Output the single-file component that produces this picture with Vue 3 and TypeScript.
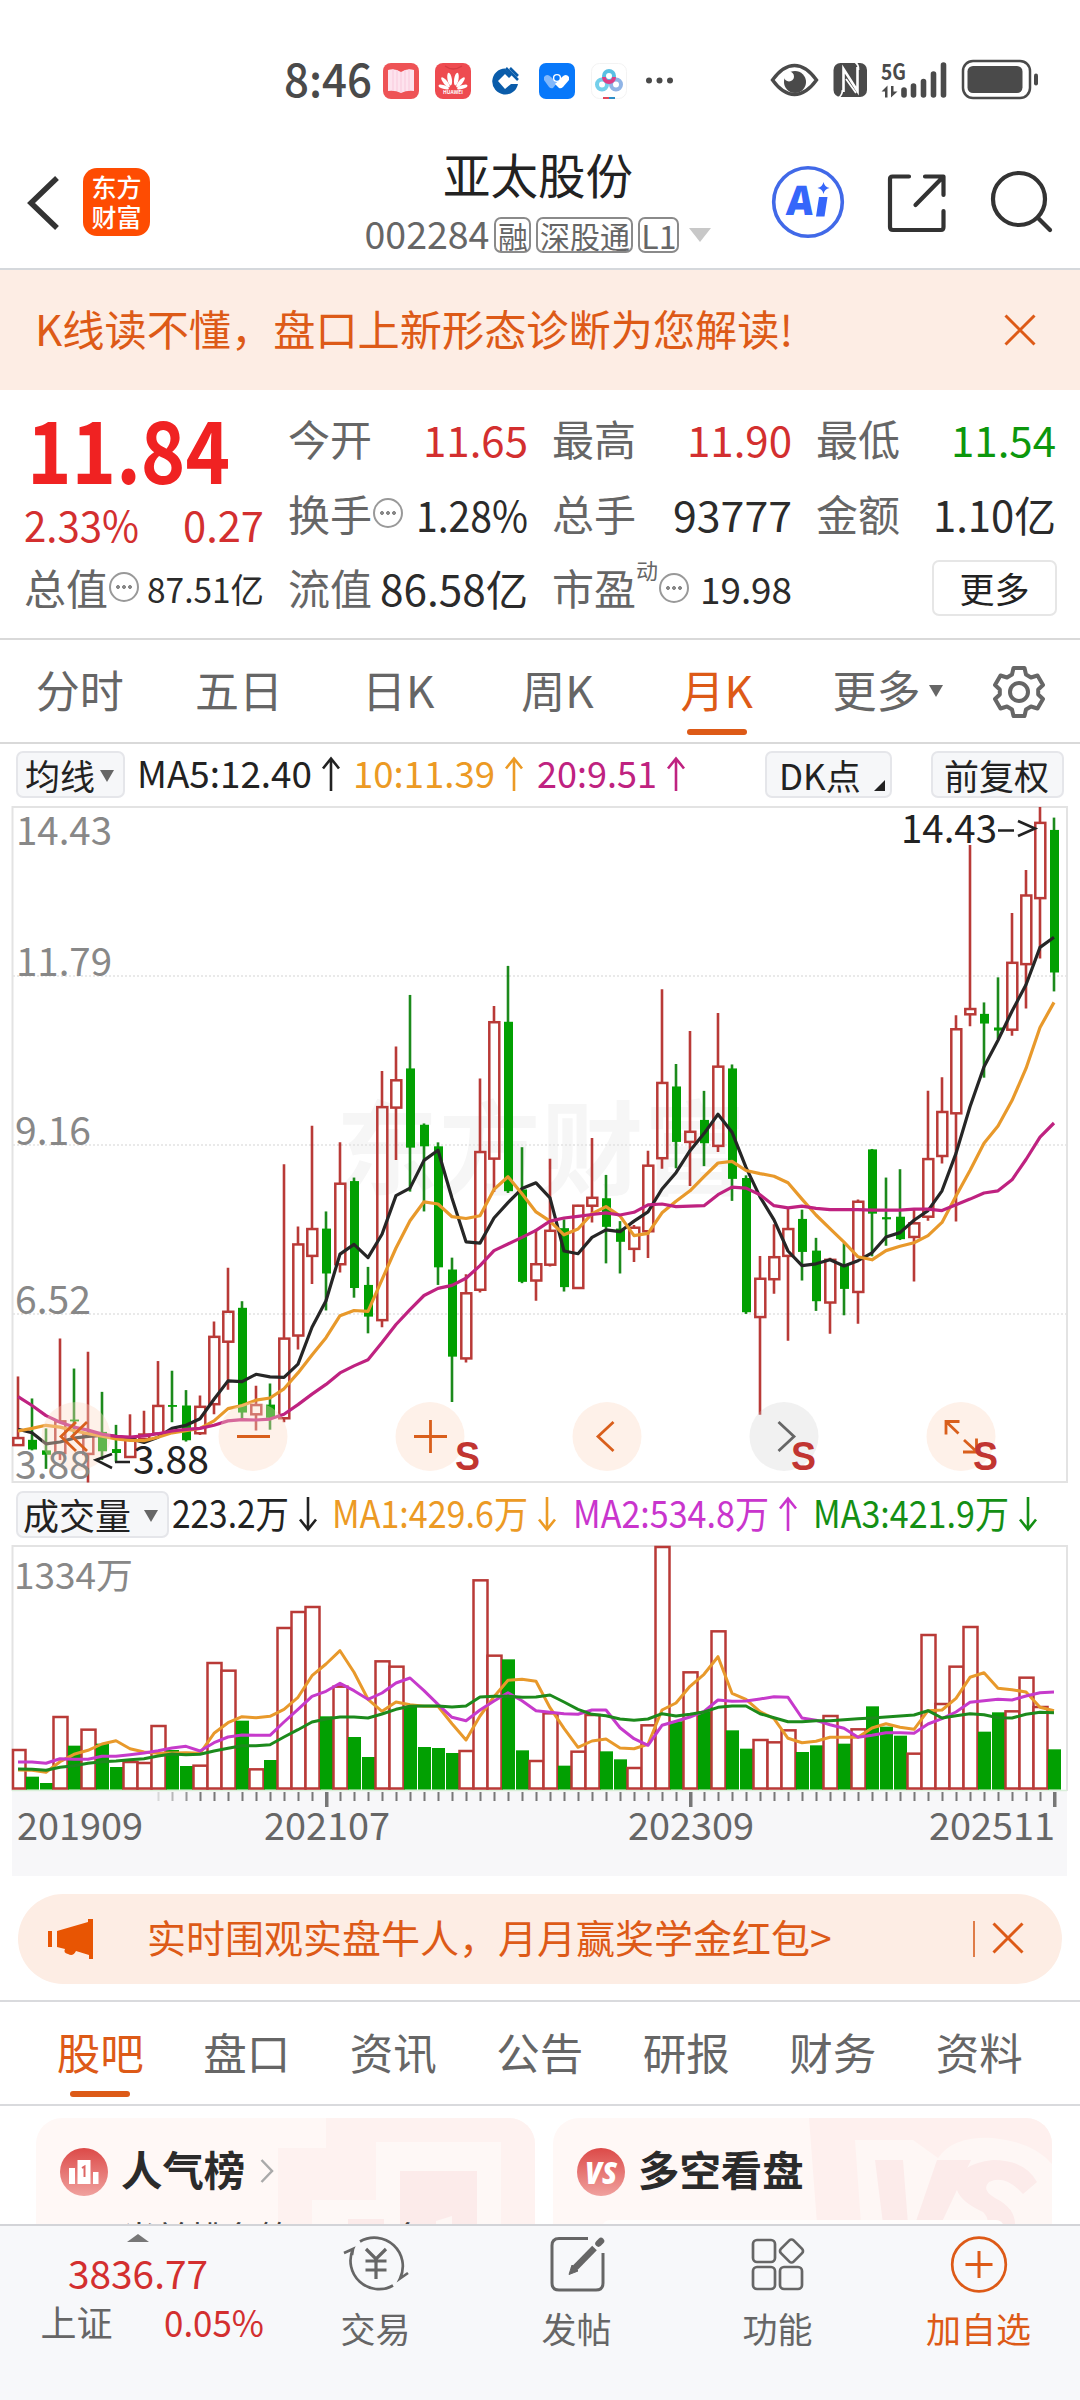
<script setup lang="ts">
import { h } from 'vue'

type Kind = 'r' | 'g'
type Candle = [Kind, number, number, number, number]

/* Text squeezed or stretched to a fixed advance width. */
const Fit = (p: { t: string; w: number; s: number; b?: number }) =>
  h('svg', { class: 'fit', width: p.w, height: p.s, viewBox: `0 0 ${p.w} ${p.s}` }, [
    h('text', {
      x: 0,
      y: p.s * 0.87,
      'font-size': p.s,
      'font-weight': p.b ?? 400,
      textLength: p.w,
      lengthAdjust: 'spacingAndGlyphs',
      fill: 'currentColor',
    }, p.t),
  ])
Fit.props = ['t', 'w', 's', 'b']

const Arrow = (p: { down?: boolean }) =>
  h('svg', { class: 'arrow', width: 20, height: 32, viewBox: '0 0 20 32', fill: 'none', stroke: 'currentColor', 'stroke-width': 2.6 }, [
    h('path', { d: p.down ? 'M10 -1V31M2 21.5L10 31.5L18 21.5' : 'M10 33V1M2 10.500L10 .5L18 10.500' }),
  ])
Arrow.props = ['down']

const STEP = 14
const X0 = 18
const cx = (i: number) => X0 + i * STEP

/* kind, high, body top, body bottom, low */
const candles: Candle[] = [
  ['r', 1310, 1450, 1466, 1466], ['g', 1360, 1454, 1476, 1478], ['g', 1428, 1478, 1488, 1520], ['r', 1224, 1412, 1484, 1500],
  ['g', 1292, 1408, 1412, 1440], ['r', 1254, 1440, 1486, 1551], ['g', 1345, 1436, 1480, 1500], ['g', 1420, 1475, 1484, 1504],
  ['r', 1396, 1452, 1493, 1493], ['r', 1388, 1442, 1452, 1456], ['r', 1275, 1377, 1440, 1440], ['g', 1297, 1375, 1379, 1414],
  ['g', 1341, 1376, 1455, 1458], ['r', 1353, 1379, 1439, 1443], ['r', 1185, 1220, 1373, 1396], ['r', 1063, 1163, 1231, 1340],
  ['g', 1139, 1154, 1392, 1410], ['r', 1331, 1375, 1396, 1433], ['g', 1326, 1374, 1404, 1431], ['r', 828, 1224, 1405, 1414],
  ['r', 969, 1010, 1217, 1249], ['r', 740, 975, 1036, 1100], ['g', 935, 974, 1076, 1160], ['r', 778, 872, 1055, 1074],
  ['g', 858, 866, 1109, 1131], ['g', 1061, 1102, 1174, 1212], ['r', 616, 698, 1182, 1198], ['r', 560, 637, 699, 818],
  ['g', 443, 610, 790, 890], ['g', 735, 738, 787, 935], ['g', 778, 787, 1062, 1102], ['g', 1040, 1067, 1265, 1368],
  ['r', 1078, 1121, 1269, 1278], ['r', 633, 800, 1113, 1119], ['r', 468, 505, 815, 891], ['g', 377, 504, 889, 893],
  ['g', 789, 885, 1095, 1098], ['r', 975, 1055, 1092, 1138], ['r', 815, 979, 1056, 1060], ['g', 953, 973, 1107, 1117],
  ['r', 920, 922, 1109, 1109], ['r', 768, 904, 922, 960], ['g', 852, 905, 970, 1053], ['g', 957, 974, 1004, 1076],
  ['r', 966, 972, 1020, 1050], ['r', 797, 831, 980, 1041], ['r', 430, 643, 814, 838], ['g', 600, 651, 777, 837],
  ['r', 525, 754, 777, 877], ['g', 661, 727, 780, 832], ['r', 484, 606, 786, 800], ['g', 601, 610, 861, 911],
  ['g', 853, 859, 1164, 1168], ['r', 1036, 1088, 1175, 1397], ['r', 964, 1039, 1089, 1122], ['r', 925, 975, 1036, 1229],
  ['g', 931, 952, 1027, 1092], ['g', 995, 1024, 1139, 1161], ['r', 1040, 1045, 1142, 1213], ['g', 1007, 1055, 1111, 1171],
  ['r', 908, 913, 1118, 1190], ['g', 793, 794, 940, 1037], ['g', 858, 948, 953, 1013], ['g', 839, 947, 998, 1000],
  ['r', 930, 962, 993, 1094], ['r', 661, 816, 947, 956], ['r', 630, 709, 809, 826], ['r', 489, 521, 712, 958],
  ['r', 102, 475, 487, 514], ['g', 460, 486, 508, 631], ['g', 403, 517, 524, 543], ['r', 257, 370, 522, 536],
  ['r', 159, 217, 373, 474], ['r', 16, 52, 223, 360], ['g', 40, 68, 392, 435],
]

const ma5 = [1430, 1438, 1463, 1459, 1450, 1446, 1444, 1446, 1451, 1460, 1448, 1428, 1421, 1406, 1362, 1320, 1322, 1305, 1311, 1312, 1282, 1198, 1138, 1032, 1010, 1040, 987, 899, 882, 819, 796, 905, 1004, 1007, 950, 915, 883, 870, 904, 1025, 1031, 994, 977, 981, 957, 936, 884, 847, 797, 758, 714, 755, 835, 902, 954, 1025, 1058, 1054, 1045, 1059, 1047, 1029, 993, 983, 955, 933, 888, 803, 697, 606, 546, 480, 420, 335, 312]
const ma10 = [1434, 1428, 1421, 1425, 1433, 1440, 1446, 1452, 1455, 1456, 1448, 1438, 1433, 1428, 1411, 1383, 1376, 1364, 1359, 1338, 1302, 1261, 1222, 1172, 1160, 1162, 1090, 1018, 956, 913, 918, 947, 951, 945, 885, 856, 895, 936, 957, 988, 975, 940, 924, 945, 990, 985, 938, 912, 888, 856, 825, 821, 842, 849, 855, 870, 907, 943, 974, 1005, 1038, 1045, 1024, 1014, 1006, 990, 960, 900, 842, 780, 741, 683, 610, 517, 460]
const ma20 = [1356, 1376, 1399, 1414, 1425, 1432, 1441, 1446, 1448, 1445, 1440, 1434, 1430, 1428, 1421, 1411, 1408, 1409, 1407, 1396, 1374, 1350, 1328, 1302, 1286, 1272, 1233, 1192, 1158, 1126, 1110, 1103, 1087, 1058, 1024, 1009, 994, 978, 957, 950, 946, 942, 938, 943, 937, 920, 918, 924, 923, 922, 897, 880, 882, 897, 922, 927, 923, 928, 931, 931, 931, 932, 932, 932, 930, 930, 933, 920, 907, 893, 888, 863, 817, 766, 734]

const py = (v: number) => v / 2.2725 - 6
const linePoints = (vs: number[], f: (v: number) => number) => vs.map((v, i) => `${cx(i)},${f(v).toFixed(1)}`).join(' ')

const volTop = [810, 890, 909, 711, 797, 749, 791, 861, 846, 849, 738, 810, 858, 857, 549, 572, 722, 868, 840, 444, 396, 381, 709, 620, 771, 831, 544, 560, 678, 801, 804, 819, 813, 301, 527, 538, 811, 843, 700, 857, 815, 705, 814, 838, 864, 736, 201, 724, 577, 694, 454, 751, 806, 780, 787, 751, 816, 796, 708, 791, 748, 679, 740, 767, 821, 465, 672, 560, 441, 755, 697, 694, 593, 681, 808]
const v1 = [870, 871, 877, 845, 823, 811, 792, 782, 806, 816, 820, 819, 818, 820, 760, 728, 710, 713, 709, 688, 652, 587, 552, 512, 577, 658, 694, 666, 674, 679, 679, 731, 780, 708, 650, 601, 598, 604, 683, 745, 802, 783, 777, 804, 806, 793, 690, 669, 619, 583, 530, 640, 658, 695, 716, 775, 788, 784, 772, 772, 772, 744, 731, 742, 748, 692, 690, 655, 592, 578, 625, 629, 636, 682, 692]
const v2 = [846, 846, 850, 836, 838, 838, 829, 829, 824, 819, 812, 804, 799, 813, 788, 771, 765, 766, 766, 726, 688, 649, 634, 610, 632, 658, 639, 609, 594, 632, 673, 712, 722, 690, 663, 638, 662, 692, 697, 701, 703, 690, 690, 743, 776, 796, 736, 724, 711, 694, 660, 664, 663, 657, 650, 652, 714, 721, 734, 745, 772, 766, 758, 758, 760, 732, 716, 696, 667, 662, 658, 660, 648, 638, 636]
const v3 = [867, 868, 871, 862, 857, 850, 845, 843, 839, 836, 828, 822, 824, 823, 813, 805, 797, 797, 794, 771, 749, 726, 717, 711, 711, 714, 702, 688, 679, 678, 678, 681, 678, 651, 649, 649, 652, 651, 645, 666, 688, 703, 707, 717, 721, 717, 701, 708, 703, 696, 682, 678, 678, 701, 713, 725, 725, 722, 722, 719, 716, 714, 711, 708, 705, 692, 714, 707, 701, 704, 713, 714, 703, 697, 698]
const vy = (v: number) => v / 3 - 65
const volBase = 244.5

const ticks = Array.from({ length: 65 }, (_, k) => k + 10)
const isMajor = (i: number) => i === 22 || i === 48 || i === 74
const tickOpacity = (i: number) => Math.min(1, 0.25 + (i - 10) * 0.25)

const chartTabs = ['分时', '五日', '日K', '周K', '月K']
const infoTabs = ['股吧', '盘口', '资讯', '公告', '研报', '财务', '资料']
</script>

<template>
  <div class="page">
    <div class="status">
      <Fit class="clock" t="8:46" :w="88" :s="46" :b="500" />
      <div class="apps">
        <svg width="36" height="36" viewBox="0 0 36 36"><rect width="36" height="36" rx="8" fill="#ee5356" /><path d="M5 7Q12 5 18 9Q24 5 31 7V28Q24 27 18 30Q12 27 5 28Z" fill="#fde3ee" /><path d="M10 6V28M14 7V28M26 6V28M22 7V28M18 9V30" stroke="#f9c9dc" stroke-width="1" /></svg>
        <svg width="36" height="36" viewBox="0 0 36 36"><rect width="36" height="36" rx="8" fill="#ee4b50" /><path d="M10 3Q18 9 27 3" fill="none" stroke="#d63c42" stroke-width="1.3" /><g fill="#fff"><ellipse cx="15.7" cy="16" rx="2.2" ry="6.4" transform="rotate(-10 15.7 22)" /><ellipse cx="20.3" cy="16" rx="2.2" ry="6.4" transform="rotate(10 20.3 22)" /><ellipse cx="14" cy="17" rx="2" ry="6.3" transform="rotate(-40 15.5 23)" /><ellipse cx="22" cy="17" rx="2" ry="6.3" transform="rotate(40 20.5 23)" /><ellipse cx="13" cy="18" rx="1.8" ry="5.4" transform="rotate(-72 15 24)" /><ellipse cx="23" cy="18" rx="1.8" ry="5.4" transform="rotate(72 21 24)" /></g><text x="18" y="31" text-anchor="middle" font-size="5" font-weight="700" fill="#fff" textLength="20">HUAWEI</text></svg>
        <svg width="36" height="36" viewBox="0 0 36 36"><path d="M18 5.5A13 13 0 1 0 31 21H24L18 26L11 18L18 11L22 15L25 12Z" fill="#0a5caa" /><path d="M19 5L31 17M23 5L31 13" stroke="#0a5caa" stroke-width="2.6" /><path d="M18 12L24 18L18 24L12 18Z" fill="#fff" /></svg>
        <svg width="36" height="36" viewBox="0 0 36 36"><rect width="36" height="36" rx="7" fill="#0878fa" /><path d="M5 14Q8 10 12 14L18 20L14 25Q12 26 10 24L5 17Z" fill="#82b8fb" /><path d="M30 14Q27 10 23 14L16 21L20 25Q22 26 24 24L30 17Z" fill="#fff" /><circle cx="18" cy="15" r="3.4" fill="#0878fa" stroke="#fff" stroke-width="1.4" /></svg>
        <svg width="36" height="36" viewBox="0 0 36 36" fill="none" stroke-width="4"><rect x=".5" y=".5" width="35" height="35" rx="8" stroke="#f3f3f3" stroke-width="1" /><circle cx="11" cy="21.500" r="5" stroke="#74cfea" /><circle cx="25" cy="21.500" r="5" stroke="#8fb4e6" /><circle cx="18" cy="13" r="5" stroke="#59bfe3" /><path d="M13 14A5 5 0 0 0 23 14" stroke="#dd3f86" /><path d="M12 35H18" stroke="#e2495a" stroke-width="2" /><path d="M18 35H24" stroke="#2c8dc6" stroke-width="2" /></svg>
        <svg width="36" height="36" viewBox="0 0 36 36" fill="#4a4a4a"><circle cx="6" cy="17.500" r="3" /><circle cx="16.500" cy="17.500" r="3" /><circle cx="27" cy="17.500" r="3" /></svg>
      </div>
      <svg class="sys" width="270" height="42" viewBox="768 59 270 42" fill="#4a4a4a">
        <path d="M772.500 80Q783 65.500 794.500 65.500T816.500 80Q806 94.500 794.500 94.500T772.500 80Z" fill="none" stroke="#4a4a4a" stroke-width="3.4" />
        <circle cx="795" cy="82" r="11" /><circle cx="789" cy="76.500" r="5" fill="#fff" />
        <rect x="833.500" y="63" width="33.500" height="34" rx="7" />
        <path d="M843.500 92V69L857.500 91V67" fill="none" stroke="#fff" stroke-width="2.600" /><path d="M838 98Q842 96 842.500 90M858.500 70Q859 65 855 62M846 79L856 93" fill="none" stroke="#fff" stroke-width="1.800" />
        <text x="881" y="79.500" font-size="22" font-weight="700" textLength="25" lengthAdjust="spacingAndGlyphs">5G</text>
        <path d="M881.500 91.500L887.500 85.500V97.500H885V91.500ZM891 86H893.500V91.500H897.500L891 97.500Z" />
        <g stroke="#4a4a4a" stroke-width="5.600" stroke-linecap="round"><path d="M904 90V95M913.500 86V95M923.500 81.500V95M933.500 74V95M943.500 65V95" /></g>
        <rect x="963" y="61" width="67" height="37" rx="10" fill="none" stroke="#4a4a4a" stroke-width="2.500" /><rect x="967.500" y="66" width="55" height="27" rx="5.500" /><rect x="1034" y="73.500" width="4" height="12" rx="2" />
      </svg>
    </div>

    <header class="head">
      <svg class="back" width="34" height="56" viewBox="0 0 34 56"><path d="M31 3L5 28L31 53" fill="none" stroke="#333" stroke-width="5.500" /></svg>
      <div class="logo"><span>东方</span><span>财富</span></div>
      <div class="title">
        <div class="name">亚太股份</div>
        <div class="code"><span>002284</span><i>融</i><i>深股通</i><i class="l1">L1</i><b class="tri pale"></b></div>
      </div>
      <div class="tools">
        <svg width="72" height="74" viewBox="0 0 72 74"><circle cx="36" cy="37" r="34.300" fill="none" stroke="#4169e8" stroke-width="3.600" /><text x="14" y="50" font-family="Open Sans, sans-serif" font-size="41" font-weight="800" transform="skewX(-5) translate(4 0)" fill="#3566fa" textLength="27" lengthAdjust="spacingAndGlyphs">A</text><path d="M47 32H55.500L52.500 51.500H44Z" fill="#3566fa" /><path d="M51.500 17Q52.500 22 57.500 23Q52.500 24 51.500 29Q50.500 24 45.500 23Q50.500 22 51.500 17Z" fill="#3566fa" /></svg>
        <svg width="60" height="60" viewBox="0 0 60 60" fill="none" stroke="#333" stroke-width="4.200" stroke-linecap="round" stroke-linejoin="round"><path d="M22 3.500H5.500Q3 3.500 3 6V54Q3 57 6 57H54Q56.500 57 56.500 54V38M38 3.500H56.500V22M56 4L28.500 32" /></svg>
        <svg width="62" height="62" viewBox="0 0 62 62" fill="none" stroke="#333" stroke-width="4.200" stroke-linecap="round"><circle cx="29" cy="28" r="26" /><path d="M48 47L60 59" /></svg>
      </div>
    </header>

    <div class="banner">
      <span>K线读不懂，盘口上新形态诊断为您解读!</span>
      <svg width="32" height="32" viewBox="0 0 32 32"><path d="M1.500 1.500L30.500 30.500M30.500 1.500L1.500 30.500" stroke="#dd5a17" stroke-width="3" /></svg>
    </div>

    <section class="quote">
      <div class="col main">
        <div class="price"><Fit t="11.84" :w="203" :s="86" :b="700" /></div>
        <div class="row change"><Fit t="2.33%" :w="115" :s="42" /><Fit t="0.27" :w="81" :s="42" /></div>
        <div class="row"><label>总值</label><span class="dots"></span><em></em><Fit class="dk" t="87.51亿" :w="117" :s="34" /></div>
      </div>
      <div class="col">
        <div class="row"><label>今开</label><em></em><Fit class="up" t="11.65" :w="105" :s="42" /></div>
        <div class="row"><label>换手</label><span class="dots"></span><em></em><Fit class="dk" t="1.28%" :w="112" :s="42" /></div>
        <div class="row"><label>流值</label><em></em><Fit class="dk" t="86.58亿" :w="148" :s="42" /></div>
      </div>
      <div class="col">
        <div class="row"><label>最高</label><em></em><Fit class="up" t="11.90" :w="105" :s="42" /></div>
        <div class="row"><label>总手</label><em></em><Fit class="dk" t="93777" :w="119" :s="42" /></div>
        <div class="row"><label>市盈</label><sup>动</sup><span class="dots"></span><em></em><Fit class="dk" t="19.98" :w="92" :s="37" /></div>
      </div>
      <div class="col">
        <div class="row"><label>最低</label><em></em><Fit class="down" t="11.54" :w="105" :s="42" /></div>
        <div class="row"><label>金额</label><em></em><Fit class="dk" t="1.10亿" :w="123" :s="42" /></div>
        <div class="row"><em></em><button class="more">更多</button></div>
      </div>
    </section>

    <nav class="ktabs">
      <div v-for="t in chartTabs" :key="t" class="kt" :class="{ on: t === '月K' }">{{ t }}</div>
      <div class="ktmore">更多<b class="tri"></b></div>
      <svg class="gear" width="54" height="54" viewBox="0 0 54 54" fill="none" stroke="#666" stroke-width="4"><path d="M21.500 3H32.500L34 9.500L39 12.500L45.500 10.500L51 20L46.200 24.500V29.500L51 34L45.500 43.500L39 41.500L34 44.500L32.500 51H21.500L20 44.500L15 41.500L8.500 43.500L3 34L7.800 29.500V24.500L3 20L8.500 10.500L15 12.500L20 9.500Z" stroke-linejoin="round" /><circle cx="27" cy="27" r="9" /></svg>
    </nav>

    <div class="ma">
      <div class="chip c1">均线<b class="tri"></b></div>
      <div class="val k"><Fit t="MA5:12.40" :w="175" :s="37" /><Arrow /></div>
      <div class="val o"><Fit t="10:11.39" :w="142" :s="37" /><Arrow /></div>
      <div class="val m"><Fit t="20:9.51" :w="120" :s="37" /><Arrow /></div>
      <div class="chip c2">DK点<b class="corner"></b></div>
      <div class="chip c3">前复权</div>
    </div>

    <svg class="kchart" width="1080" height="678" viewBox="0 0 1080 678">
      <rect x="12.500" y="1" width="1054.500" height="675" fill="#fff" stroke="#e3e3e3" stroke-width="2" />
      <text x="336" y="381" font-size="102" font-weight="700" fill="#f6f6f6" textLength="410">东方财富</text>
      <g stroke="#e2e2e2" stroke-width="1.500" stroke-dasharray="2 2"><path d="M13 170H1067M13 339H1067M13 508H1067" /></g>
      <g v-for="(c, i) in candles" :key="i">
        <template v-if="c[0] === 'r'">
          <path :d="`M${cx(i)} ${py(c[1])}V${py(c[2])}M${cx(i)} ${py(c[3])}V${py(c[4])}`" stroke="#b93a37" stroke-width="2.600" />
          <rect :x="cx(i) - 4.700" :y="py(c[2])" width="10" :height="py(c[3]) - py(c[2])" fill="none" stroke="#b93a37" stroke-width="2.500" />
        </template>
        <template v-else>
          <path :d="`M${cx(i)} ${py(c[1])}V${py(c[4])}`" stroke="#1c8a1c" stroke-width="2.600" />
          <rect :x="cx(i) - 4" :y="py(c[2])" width="9" :height="py(c[3]) - py(c[2])" fill="#02a002" />
        </template>
      </g>
      <g fill="none" stroke-width="3.200" stroke-linejoin="round">
        <polyline :points="linePoints(ma5, py)" stroke="#262626" />
        <polyline :points="linePoints(ma10, py)" stroke="#e8992b" />
        <polyline :points="linePoints(ma20, py)" stroke="#bf2280" />
      </g>
      <g fill="#fdd9c5" fill-opacity=".38"><circle v-for="x in [76, 253, 430, 607, 961]" :key="x" :cx="x" cy="630.500" r="34.500" /></g>
      <circle cx="784" cy="630.500" r="34.500" fill="#ccc" fill-opacity=".28" />
      <g fill="none" stroke="#d95f1c" stroke-width="2.800">
        <path d="M76 616L61 630.500L76 645M87 616L72 630.500L87 645" />
        <path d="M237 630.500H270M414 630.500H447M430.500 614V647" />
        <path d="M613.500 616L598 630.500L613.500 645" />
        <path d="M946 628.500V615.500H959.500M946 615.500L958.500 627.500M963 646H976.500V632.500M976.500 645.500L964 634" />
      </g>
      <path d="M778.500 616L794 630.500L778.500 645" fill="none" stroke="#666" stroke-width="2.800" />
      <g fill="#888" font-size="39">
        <text x="16" y="39" textLength="96" lengthAdjust="spacingAndGlyphs">14.43</text>
        <text x="16" y="170" textLength="96" lengthAdjust="spacingAndGlyphs">11.79</text>
        <text x="15" y="339" textLength="76" lengthAdjust="spacingAndGlyphs">9.16</text>
        <text x="15" y="508" textLength="76" lengthAdjust="spacingAndGlyphs">6.52</text>
        <text x="15" y="673" textLength="76" lengthAdjust="spacingAndGlyphs">3.88</text>
      </g>
      <g fill="#222" font-size="39">
        <text x="901" y="37" textLength="96" lengthAdjust="spacingAndGlyphs">14.43</text>
        <text x="133" y="668" textLength="76" lengthAdjust="spacingAndGlyphs">3.88</text>
      </g>
      <path d="M998 24.500H1014M1018 15L1035 22.500L1018 30M130 656H115M112 648L96 654L112 662" fill="none" stroke="#222" stroke-width="2.600" />
      <g fill="#c13531" font-size="40" font-weight="700" font-family="Liberation Sans, sans-serif">
        <text x="455" y="664" textLength="25" lengthAdjust="spacingAndGlyphs">S</text><text x="791" y="664" textLength="25" lengthAdjust="spacingAndGlyphs">S</text><text x="973" y="664" textLength="25" lengthAdjust="spacingAndGlyphs">S</text>
      </g>
    </svg>

    <div class="vol">
      <div class="chip c4">成交量<b class="tri"></b></div>
      <div class="val k"><Fit t="223.2万" :w="117" :s="38" /><Arrow :down="true" /></div>
      <div class="val o"><Fit t="MA1:429.6万" :w="196" :s="38" /><Arrow :down="true" /></div>
      <div class="val p"><Fit t="MA2:534.8万" :w="196" :s="38" /><Arrow /></div>
      <div class="val g"><Fit t="MA3:421.9万" :w="196" :s="38" /><Arrow :down="true" /></div>
    </div>

    <svg class="vchart" width="1080" height="332" viewBox="0 0 1080 332">
      <rect x="12" y="246" width="1055" height="85" fill="#f7f7f9" />
      <path d="M12.500 246V1H1067V246" fill="none" stroke="#e3e3e3" stroke-width="2" />
      <path d="M12 245.500H1067" stroke="#d9efd9" stroke-width="1.500" />
      <text x="14" y="44" font-size="36" fill="#888" textLength="119" lengthAdjust="spacingAndGlyphs">1334万</text>
      <g v-for="(v, i) in volTop" :key="i">
        <rect v-if="candles[i][0] === 'r'" :x="cx(i) - (i ? 6.500 : 5)" :y="vy(v)" :width="i ? 14 : 12.500" :height="volBase - vy(v) - 1" fill="#fff" stroke="#b93a37" stroke-width="2.500" />
        <rect v-else :x="cx(i) - 6" :y="vy(v)" width="13" :height="volBase - vy(v)" fill="#02a002" />
      </g>
      <g fill="none" stroke-width="3" stroke-linejoin="round">
        <polyline :points="linePoints(v1, vy)" stroke="#e8992b" />
        <polyline :points="linePoints(v2, vy)" stroke="#c63acb" />
        <polyline :points="linePoints(v3, vy)" stroke="#1c8a1c" />
      </g>
      <rect v-for="i in ticks" :key="i" :x="cx(i) - (isMajor(i) ? 1 : .5)" y="247" :width="isMajor(i) ? 3.500 : 2" :height="isMajor(i) ? 15 : 9" fill="#777" :opacity="tickOpacity(i)" />
      <g fill="#666" font-size="38">
        <text x="17" y="295" textLength="126" lengthAdjust="spacingAndGlyphs">201909</text>
        <text x="264" y="295" textLength="126" lengthAdjust="spacingAndGlyphs">202107</text>
        <text x="628" y="295" textLength="126" lengthAdjust="spacingAndGlyphs">202309</text>
        <text x="929" y="295" textLength="126" lengthAdjust="spacingAndGlyphs">202511</text>
      </g>
    </svg>

    <div class="promo">
      <svg width="46" height="40" viewBox="0 0 46 40" fill="#e85503"><path d="M0 12H4V28H0ZM9 12L40 3V0H45V40H41V36L28 32Q25 38 20 35Q15 34 17 30L9 28Z" /></svg>
      <span>实时围观实盘牛人，月月赢奖学金红包&gt;</span>
      <s></s>
      <svg class="px" width="32" height="32" viewBox="0 0 32 32"><path d="M1.500 1.500L30.500 30.500M30.500 1.500L1.500 30.500" stroke="#dd5a17" stroke-width="3" /></svg>
    </div>

    <nav class="itabs">
      <div v-for="t in infoTabs" :key="t" class="it" :class="{ on: t === '股吧' }">{{ t }}</div>
    </nav>

    <section class="cards">
      <div class="card">
        <svg class="deco" width="499" height="106" viewBox="0 0 499 106"><path d="M290 0H499V106H242V30H290Z" fill="#fef2f0" /><path d="M276 106V82H340V24H465V106Z" fill="#fef8f6" /><path d="M364 53H441V106H364ZM312 101H348V106H312Z" fill="#fcebea" /><path d="M400 106V103L416 98V106Z" fill="#fef7f5" /></svg>
        <div class="ct">
          <svg width="48" height="48" viewBox="0 0 48 48"><defs><linearGradient id="rg" x2="0" y2="1"><stop offset="0" stop-color="#dc4a48" /><stop offset="1" stop-color="#f0a19e" /></linearGradient></defs><circle cx="24" cy="24" r="24" fill="url(#rg)" /><path d="M9 20H15V36H9ZM17.500 12H30.500V36H17.500ZM33 24H38.500V36H33Z" fill="#fff" /><path d="M22 20L24.500 18.500V29" fill="none" stroke="#dd6664" stroke-width="2" /></svg>
          <span>人气榜</span>
          <svg class="chev" width="14" height="26" viewBox="0 0 14 26"><path d="M1.500 2L12 13L1.500 24" fill="none" stroke="#aaa" stroke-width="2.500" /></svg>
        </div>
        <div class="rank"><span>当前排名第</span><span>名</span></div>
      </div>
      <div class="card">
        <svg class="deco" width="499" height="106" viewBox="0 0 499 106"><path d="M256 0H499V106H264Z" fill="#fef0ee" /><path d="M302 22H360L385 40Q400 18 440 20Q480 24 499 46V106H308Z" fill="#fef7f5" /><path d="M322 42H350L355 106H330ZM362 106L384 42H418L388 106Z" fill="#fcebea" /><path d="M484 64Q472 42 440 42Q402 46 404 72Q408 84 430 94Q436 100 434 106H462Q462 90 442 80Q428 72 436 64Q452 56 470 76Z" fill="#fcebea" /><rect x="50" y="102" width="400" height="10" rx="8" fill="#fffdfc" /></svg>
        <div class="ct">
          <svg width="48" height="48" viewBox="0 0 48 48"><circle cx="24" cy="24" r="24" fill="url(#rg)" /><text x="8" y="35.500" font-size="30" font-weight="800" font-style="italic" font-family="Open Sans, sans-serif" fill="#fff" textLength="32" lengthAdjust="spacingAndGlyphs">VS</text></svg>
          <span>多空看盘</span>
        </div>
      </div>
    </section>

    <footer class="bar">
      <div class="index">
        <b class="tri upw"></b>
        <Fit class="n1" t="3836.77" :w="140" :s="39" />
        <div class="sz"><span>上证</span><Fit class="up" t="0.05%" :w="100" :s="37" /></div>
      </div>
      <div class="act">
        <svg width="66" height="60" viewBox="0 0 66 60" fill="none" stroke="#666" stroke-width="2.700"><path d="M17 7.500A28.500 28.500 0 0 1 57 44.500L65 39M50 51.500A28.500 28.500 0 0 1 10 15L1 19M10 15L9 21" /><path d="M23 15L33 25L43 15M22.500 27H43.500M22.500 36H43.500M33 25V45" stroke-width="3.200" /></svg>
        <span>交易</span>
      </div>
      <div class="act">
        <svg width="58" height="60" viewBox="0 0 58 60" fill="none" stroke="#666" stroke-width="3"><path d="M40 4.500H11Q4 4.500 4 11.500V49Q4 56 11 56H48Q55 56 55 49V19" /><path d="M46.500 14L25 36" stroke-width="6.500" /><path d="M24 31L21 40.500L30 37Z" fill="#666" stroke-width="1" /><path d="M50.500 9.500L53 7" stroke-width="6.500" stroke-linecap="round" /></svg>
        <span>发帖</span>
      </div>
      <div class="act">
        <svg width="54" height="60" viewBox="0 0 54 60" fill="none" stroke="#666" stroke-width="2.700"><rect x="2" y="6" width="22" height="22" rx="4" /><rect x="2" y="33" width="22" height="22" rx="4" /><rect x="29" y="33" width="22" height="22" rx="4" /><rect x="31.500" y="8" width="18" height="18" rx="3" transform="rotate(45 40.500 17)" /></svg>
        <span>功能</span>
      </div>
      <div class="act hot">
        <svg width="60" height="60" viewBox="0 0 60 60" fill="none" stroke="#dd5a17" stroke-width="2.700"><circle cx="30" cy="30.500" r="26.800" /><path d="M16.500 30.500H43.500M30 17V44" stroke-width="3" /></svg>
        <span>加自选</span>
      </div>
    </footer>
  </div>
</template>

<style>
body { background: #fff; }
</style>

<style scoped>
.page { width: 1080px; height: 2400px; overflow: hidden; background: #fff; color: #222; font-family: "Noto Sans CJK SC", "Noto Sans", sans-serif; display: flex; flex-direction: column; }
.page > * { box-sizing: border-box; flex: none; }
svg { display: block; flex: none; overflow: visible; }
.status { height: 122px; padding: 59px 42px 0 284px; display: flex; align-items: flex-start; color: #4a4a4a; }
.clock { margin-top: -2px; }
.apps { display: flex; gap: 16px; padding: 4px 0 0 11px; }
.apps svg { overflow: hidden; }
.sys { margin-left: auto; }
.head { height: 148px; border-bottom: 2px solid #d5d8dc; display: flex; align-items: flex-start; padding: 0 28px 0 26px; }
.back { margin-top: 53px; }
.logo { width: 67px; height: 68px; margin: 46px 0 0 23px; border-radius: 14px; background: #fe4c02; color: #fff; font-size: 25px; line-height: 30px; font-weight: 500; display: flex; flex-direction: column; align-items: center; justify-content: center; }
.logo span { position: relative; top: -1px; }
.title { margin-left: 198px; width: 380px; display: flex; flex-direction: column; align-items: center; }
.name { font-size: 47.500px; line-height: 56px; margin-top: 24px; }
.code { margin-top: 15px; height: 36px; display: flex; align-items: center; gap: 5px; font-size: 37.500px; color: #666; line-height: 36px; white-space: nowrap; }
.code span { position: relative; top: -2px; }
.code i { flex: none; font-style: normal; font-size: 30px; line-height: 29px; height: 36px; box-sizing: border-box; border: 2px solid #8a8a8a; border-radius: 7px; display: flex; align-items: center; justify-content: center; width: 37px; }
.code i:nth-of-type(2) { width: 97px; }
.code .l1 { width: 41px; font-size: 32px; }
.tri { display: block; width: 0; height: 0; border: 7px solid transparent; border-top: 12px solid #666; border-bottom: 0; }
.tri.pale { border-width: 14px 11px 0; border-top-color: #c8c8c8; margin-left: 5px; }
.tools { display: flex; margin-left: auto; margin-top: 43px; gap: 43px; }
.tools svg:nth-child(2) { margin-top: 8px; }
.tools svg:nth-child(3) { margin-top: 6px; }
.banner { height: 120px; background: #fdede4; color: #dd5a17; font-size: 42.200px; line-height: 116px; padding: 0 44px 0 35px; display: flex; justify-content: space-between; align-items: flex-start; }
.banner svg { margin-top: 44px; }
.quote { height: 250px; border-bottom: 2px solid #d9d9d9; display: flex; gap: 26px; padding: 14px 0 0 24px; font-size: 42px; color: #666; }
.col { width: 238px; }
.row { height: 74.500px; display: flex; align-items: center; position: relative; }
.row em { flex: 1; }
.row label { line-height: 60px; position: relative; top: -3px; white-space: nowrap; }
.row .fit { margin-right: -2px; }
.row sup { font-size: 22px; line-height: 24px; margin: -42px 0 0 0; }
.main .price { box-sizing: border-box; height: 92px; padding: 5px 0 0 3px; color: #f02222; }
.main .change { height: 56px; color: #d32f2f; justify-content: space-between; padding-top: 4px; box-sizing: border-box; }
.main .row:last-child { height: 75px; }
.up { color: #d32f2f; }
.down { color: #0c970c; }
.dk { color: #2b2b2b; }
.dots { width: 30px; height: 30px; box-sizing: border-box; border: 2px solid #999; border-radius: 50%; background: radial-gradient(circle, #888 1.600px, transparent 2.200px) 0 0 / 6px 26px; background-position: 10px 0; background-clip: content-box; padding: 0 4px; margin: -5px 0 0 1px; }
.more { font: 35px/50px "Noto Sans CJK SC", sans-serif; width: 125px; height: 56px; box-sizing: border-box; border: 2px solid #e6e6e6; border-radius: 7px; background: #fff; color: #222; padding: 0; margin: -4px -3px 0 0; }
.ktabs { height: 104px; border-bottom: 2px solid #d9d9d9; display: flex; font-size: 44px; color: #666; line-height: 98px; }
.kt, .it { text-align: center; position: relative; }
.kt { width: 159.300px; }
.on { color: #dd5a17; }
.on::after { content: ""; position: absolute; left: 50%; margin-left: -30px; width: 60px; height: 6px; border-radius: 3px; background: #dd5a17; top: 89px; }
.ktmore { margin-left: 36px; height: 98px; display: flex; align-items: center; gap: 9px; }
.ktmore .tri { margin-top: 3px; }
.gear { margin: 25px 0 0 auto; margin-right: 34px; }
.ma, .vol { display: flex; align-items: flex-start; }
.ma { height: 62px; padding-top: 7px; padding-left: 16px; }
.chip { height: 47px; box-sizing: border-box; background: #f6f7f9; border: 2px solid #e5e6ea; border-radius: 7px; font-size: 35px; line-height: 39px; display: flex; align-items: center; white-space: nowrap; }
.chip .tri { margin-top: 3px; }
.c1 { width: 109px; padding-left: 7px; gap: 5px; }
.c2 { width: 127px; padding-left: 12px; position: relative; margin-left: auto; }
.c3 { width: 133px; padding-left: 11px; margin: 0 16px 0 39px; }
.c4 { width: 153px; padding-left: 5px; gap: 13px; font-size: 36px; }
.corner { position: absolute; right: 5px; bottom: 5px; border-left: 11px solid transparent; border-bottom: 11px solid #222; }
.val { display: flex; align-items: center; height: 46px; gap: 9px; margin-right: 12px; }
.ma .val.k { margin-left: 12px; }
.ma .val.o { margin-right: 13px; }
.k { color: #222; }
.o { color: #ec9a24; }
.m { color: #bf2280; }
.p { color: #c935cd; }
.g { color: #148f14; }
.vol { height: 61px; padding: 7px 0 0 16px; }
.vol .val { gap: 9px; margin-right: 15.500px; height: 45px; }
.vol .val.k { margin: 0 14px 0 3px; }
.promo { margin: 17px 18px 0; height: 90px; border-radius: 45px; background: #fdede4; display: flex; align-items: center; padding: 0 38px 0 30px; color: #dd5a17; font-size: 39px; }
.promo span { margin: -6px 0 0 53px; line-height: 84px; }
.promo s { margin-left: auto; width: 2px; height: 36px; background: #df7c48; }
.promo .px { margin: -2px 0 0 17px; }
.itabs { margin-top: 16px; height: 106px; border-top: 2px solid #d9dadd; border-bottom: 2px solid #d9dadd; display: flex; padding-left: 27px; font-size: 43.500px; line-height: 99px; color: #666; }
.it { width: 146.500px; }
.it.on::after { top: 89px; }
.cards { height: 118px; overflow: hidden; padding: 12px 28px 0 36px; display: flex; gap: 18px; }
.card { width: 499px; height: 130px; border-radius: 26px; background: #fff8f6; overflow: hidden; position: relative; flex: none; }
.deco { position: absolute; left: 0; top: 0; }
.ct { position: relative; display: flex; align-items: center; padding: 0 0 0 24px; height: 108px; font-size: 41.400px; font-weight: 700; line-height: 60px; color: #2b2b2b; }
.ct span { margin: -8px 0 0 13px; }
.chev { margin: -3px 0 0 15px; }
.rank { position: relative; display: flex; gap: 101px; font-size: 34px; line-height: 40px; padding-left: 86px; margin-top: -9px; color: #444; }
.bar { height: 176px; background: #f7f8fa; border-top: 2px solid #d3d4d8; display: flex; }
.index { width: 275px; display: flex; flex-direction: column; align-items: center; }
.tri.upw { border: 11px solid transparent; border-top: 0; border-bottom: 8px solid #777; margin-top: 8px; }
.n1 { color: #d32f2f; margin: 13px 0 0; }
.sz { width: 223px; display: flex; justify-content: space-between; align-items: center; margin: 11px 0 0 29px; font-size: 36px; color: #666; line-height: 36px; }
.sz span { position: relative; top: -3px; }
.act { width: 201px; display: flex; flex-direction: column; align-items: center; padding-top: 8px; font-size: 35px; line-height: 50px; color: #666; }
.act span { margin-top: 9px; }
.hot { color: #dd5a17; }
</style>
